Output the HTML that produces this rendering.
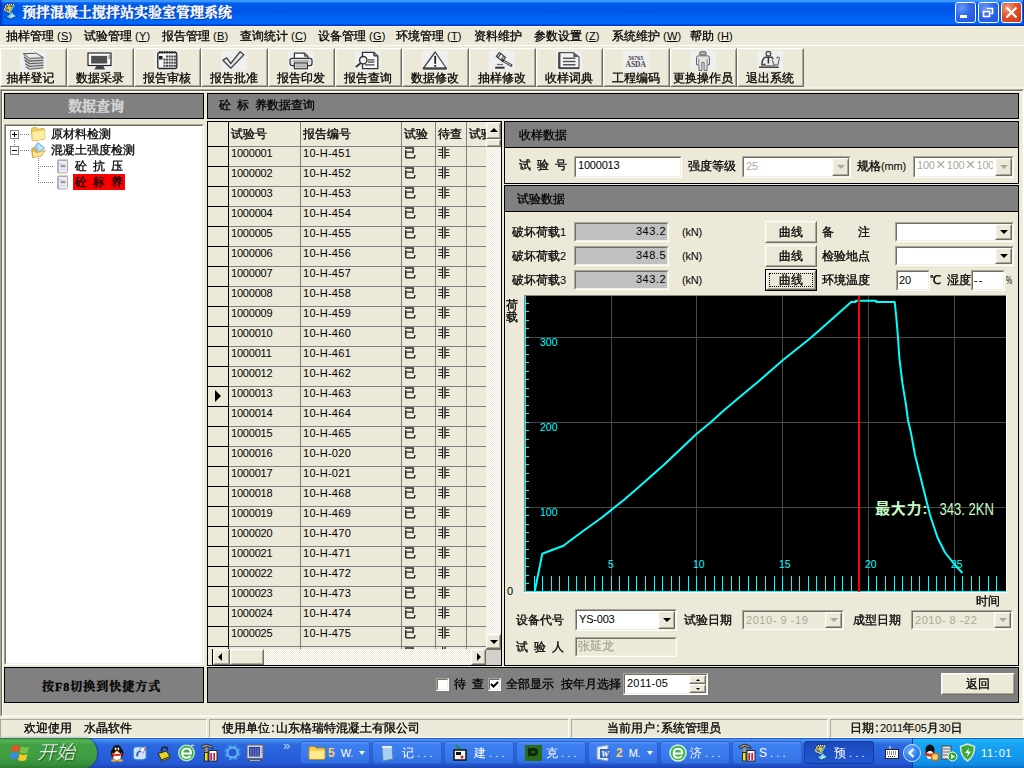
<!DOCTYPE html><html lang="zh-CN"><head><meta charset="utf-8"><title>预拌混凝土搅拌站实验室管理系统</title><style>
*{box-sizing:border-box;margin:0;padding:0}
html,body{width:1024px;height:768px;overflow:hidden;background:#ece9d8}
body{-webkit-text-stroke:.3px;font-family:"Liberation Sans","WenQuanYi Zen Hei","Noto Sans CJK SC",sans-serif;font-size:12px;color:#000;position:relative;line-height:12px}
.a{position:absolute}
.t{position:absolute;white-space:pre;line-height:14px;height:14px;word-spacing:2.67px}
.n{-webkit-text-stroke:0;font-family:"Liberation Sans",sans-serif;font-size:11px;letter-spacing:-0.2px;word-spacing:2.9px}
.gb{position:absolute;background:#808080;border:1px solid #000}
.sunk{position:absolute;border:1px solid;border-color:#aca899 #fff #fff #aca899;background:#fff}
.sunk:before{content:"";position:absolute;left:0;top:0;right:0;bottom:0;border:1px solid;border-color:#716f64 #f1efe2 #f1efe2 #716f64}
.btn{position:absolute;background:#ece9d8;border:1px solid;border-color:#fff #716f64 #716f64 #fff;text-align:center}
.btn:before{content:"";position:absolute;left:0;top:0;right:0;bottom:0;border:1px solid;border-color:#f1efe2 #aca899 #aca899 #f1efe2}
.tb{position:absolute;top:48px;width:67px;height:39px;border:1px solid;border-color:#fff #716f64 #716f64 #fff;background:#ece9d8}
.tb:before{content:"";position:absolute;left:0;top:0;right:0;bottom:0;border:1px solid;border-color:#f1efe2 #aca899 #aca899 #f1efe2}
.tb .ic{position:absolute;left:19px;top:2px;width:26px;height:20px;background:#efefef}
.tb .lb{position:absolute;left:-1px;right:0;top:22px;text-align:center;line-height:14px;white-space:nowrap}
.cell{position:absolute;line-height:14px;white-space:nowrap}
.dis{color:#aca899}
.c{display:inline-block;width:6px;text-align:center;font-family:"Liberation Sans",sans-serif}
</style></head><body>
<div class="a" style="left:0;top:0;width:1024px;height:26px;background:linear-gradient(#3d95ff 0,#3d95ff 6%,#0a6ef8 10%,#005ae8 16%,#0056e5 45%,#0060f0 62%,#0066f8 74%,#0068fc 91%,#0050e0 94%,#0036c8 97%,#0034c6 100%)"></div>
<div class="a" style="left:1023px;top:0;width:1px;height:26px;background:#0030a8"></div>
<div class="a" style="left:0;top:26px;width:1024px;height:1px;background:#f7f4e3"></div>
<svg class="a" style="left:0;top:0" width="20" height="22" viewBox="0 0 20 22"><path d="M12.100 11.700L16.400 16.400 10.5 19.100 6.200 16.800z" fill="#6cc8f6" stroke="#000" stroke-width="1" stroke-dasharray="1 1"/><path d="M11 14.5l3 1.800-3.5 1.600z" fill="#c8ecff"/><path d="M6 4L15.400 4.300 10.200 13.700 3.300 10.400z" fill="#fff" stroke="#000" stroke-width="1" stroke-dasharray="1 1"/><path d="M6.600 5L13.600 5.300 9.700 12.300 4.600 9.900z" fill="#6e6e6e"/><path d="M14.600 4.800L10 13.200" stroke="#28b0f0" stroke-width="1.300"/><path d="M6.5 8.300l1.700-.3.700-1.700.6 3.700 1-2.700 1 .8" fill="none" stroke="#f0e418" stroke-width="1.100"/></svg>
<div class="a" style="left:0;top:0;width:4px;height:26px;background:linear-gradient(90deg,rgba(0,30,170,.75),rgba(0,40,190,.35) 50%,rgba(0,60,220,0))"></div>
<div class="t" style="left:22px;top:5px;height:16px;line-height:16px;font:bold 14px/16px 'Liberation Serif','Noto Serif CJK SC',serif;color:#fff;-webkit-text-stroke:.35px #fff;text-shadow:1px 1px 0 #0a2a8a">预拌混凝土搅拌站实验室管理系统</div>
<div class="a" style="left:955px;top:2px;width:21px;height:21px;border:1px solid #fff;border-radius:3px;background:radial-gradient(circle at 30% 25%,#6a98fa 0,#2f66ea 45%,#2054dc 100%)"><div class="a" style="left:4px;top:12px;width:7px;height:3px;background:#fff"></div></div>
<div class="a" style="left:978px;top:2px;width:21px;height:21px;border:1px solid #fff;border-radius:3px;background:radial-gradient(circle at 30% 25%,#6a98fa 0,#2f66ea 45%,#2054dc 100%)"><svg class="a" style="left:0;top:0" width="19" height="19"><path d="M7.5 5.5h6v5h-2" fill="none" stroke="#fff" stroke-width="1.600"/><rect x="4.5" y="8.5" width="6" height="5" fill="none" stroke="#fff" stroke-width="1.600"/></svg></div>
<div class="a" style="left:1001px;top:2px;width:21px;height:21px;border:1px solid #fff;border-radius:3px;background:radial-gradient(circle at 30% 25%,#f0a080 0,#e0502a 45%,#c83a14 100%)"><svg class="a" style="left:0;top:0" width="19" height="19"><path d="M4.5 4.5l10 10M14.5 4.5l-10 10" stroke="#fff" stroke-width="2.200"/></svg></div>
<div class="t" style="left:6px;top:29px">抽样管理<span class="n" style="letter-spacing:.2px;margin-left:3px">(<u>S</u>)</span></div>
<div class="t" style="left:84px;top:29px">试验管理<span class="n" style="letter-spacing:.2px;margin-left:3px">(<u>Y</u>)</span></div>
<div class="t" style="left:162px;top:29px">报告管理<span class="n" style="letter-spacing:.2px;margin-left:3px">(<u>B</u>)</span></div>
<div class="t" style="left:240px;top:29px">查询统计<span class="n" style="letter-spacing:.2px;margin-left:3px">(<u>C</u>)</span></div>
<div class="t" style="left:318px;top:29px">设备管理<span class="n" style="letter-spacing:.2px;margin-left:3px">(<u>G</u>)</span></div>
<div class="t" style="left:396px;top:29px">环境管理<span class="n" style="letter-spacing:.2px;margin-left:3px">(<u>T</u>)</span></div>
<div class="t" style="left:474px;top:29px">资料维护</div>
<div class="t" style="left:534px;top:29px">参数设置<span class="n" style="letter-spacing:.2px;margin-left:3px">(<u>Z</u>)</span></div>
<div class="t" style="left:612px;top:29px">系统维护<span class="n" style="letter-spacing:.2px;margin-left:3px">(<u>W</u>)</span></div>
<div class="t" style="left:690px;top:29px">帮助<span class="n" style="letter-spacing:.2px;margin-left:3px">(<u>H</u>)</span></div>
<div class="a" style="left:0;top:45px;width:1024px;height:1px;background:#fff"></div>
<div class="tb" style="left:0px"><div class="ic"><svg width="26" height="20" viewBox="0 0 26 20"><path d="M3.3 2.700L16.300 2.200 23.5 6.800V16.700L9.5 18.200 5.900 16.200z" fill="#d4d4d4"/><path d="M3.300 2.700L16.300 2.200 23.5 6.800 9.5 7.400z" fill="#ececec" stroke="#555" stroke-width="1"/><path d="M3.9 6.0L9.5 10.1 23.5 9.3" fill="none" stroke="#555" stroke-width="1.100"/><path d="M4.6 9.3L9.5 12.8 23.5 11.8" fill="none" stroke="#555" stroke-width="1.100"/><path d="M5.2 12.6L9.5 15.5 23.5 14.3" fill="none" stroke="#555" stroke-width="1.100"/><path d="M5.9 15.9L9.5 18.2 23.5 16.8" fill="none" stroke="#555" stroke-width="1.100"/></svg></div><div class="lb" style="left:-6px">抽样登记</div></div>
<div class="tb" style="left:67px"><div class="ic"><svg width="26" height="20" viewBox="0 0 26 20"><rect x="1" y="2" width="23" height="12.5" fill="#fff" stroke="#222" stroke-width="1.200"/><rect x="4.100" y="4.800" width="16.100" height="7.700" fill="#505050"/><rect x="21.5" y="4" width="1.5" height="4" fill="#999"/><path d="M9.800 14.600h6.200l2.100 4H7.200z" fill="#444"/></svg></div><div class="lb" style="left:-1px">数据采录</div></div>
<div class="tb" style="left:134px"><div class="ic"><svg width="26" height="20" viewBox="0 0 26 20"><rect x="3.800" y="1.5" width="19" height="16" rx="1.5" fill="#f4f4f4" stroke="#222" stroke-width="1.300"/><path d="M5 1.200h17" stroke="#222" stroke-width="2" stroke-dasharray="1.5 1"/><rect x="5" y="5" width="3.5" height="3.5" fill="#222"/><rect x="12.1" y="4.5" width="2" height="2" fill="#444"/><rect x="14.7" y="4.5" width="2" height="2" fill="#444"/><rect x="17.3" y="4.5" width="2" height="2" fill="#444"/><rect x="19.9" y="4.5" width="2" height="2" fill="#444"/><rect x="9.5" y="7.6" width="2" height="2" fill="#444"/><rect x="12.1" y="7.6" width="2" height="2" fill="#444"/><rect x="14.7" y="7.6" width="2" height="2" fill="#444"/><rect x="17.3" y="7.6" width="2" height="2" fill="#444"/><rect x="19.9" y="7.6" width="2" height="2" fill="#444"/><rect x="9.5" y="10.7" width="2" height="2" fill="#444"/><rect x="12.1" y="10.7" width="2" height="2" fill="#444"/><rect x="14.7" y="10.7" width="2" height="2" fill="#444"/><rect x="17.3" y="10.7" width="2" height="2" fill="#444"/><rect x="19.9" y="10.7" width="2" height="2" fill="#444"/><rect x="9.5" y="13.8" width="2" height="2" fill="#444"/><rect x="12.1" y="13.8" width="2" height="2" fill="#444"/><rect x="14.7" y="13.8" width="2" height="2" fill="#444"/><rect x="17.3" y="13.8" width="2" height="2" fill="#444"/><rect x="19.9" y="13.8" width="2" height="2" fill="#444"/></svg></div><div class="lb" style="left:-1px">报告审核</div></div>
<div class="tb" style="left:201px"><div class="ic"><svg width="26" height="20" viewBox="0 0 26 20"><path d="M2 9.200L5.700 6.800 9.800 12.5 19.100 .8 22.800 3.700 9.800 17.200z" fill="#ececec" stroke="#4a4a4a" stroke-width="1.400" stroke-linejoin="round"/></svg></div><div class="lb" style="left:-1px">报告批准</div></div>
<div class="tb" style="left:268px"><div class="ic"><svg width="26" height="20" viewBox="0 0 26 20"><path d="M6.400 7.400V2.200h10l3.5 3v2.200" fill="#fafafa" stroke="#333" stroke-width="1.200"/><path d="M16.400 2.200v3h3.5" fill="#888" stroke="#333" stroke-width=".8"/><rect x="2" y="7.400" width="22" height="7.200" rx="2" fill="#e4e4e4" stroke="#333" stroke-width="1.200"/><rect x="6.400" y="12" width="13" height="5.700" fill="#f8f8f8" stroke="#333" stroke-width="1.200"/><path d="M7.5 14h11M7.5 15.800h11" stroke="#777" stroke-width=".9"/><path d="M5 10h16" stroke="#888" stroke-width="1"/></svg></div><div class="lb" style="left:-1px">报告印发</div></div>
<div class="tb" style="left:335px"><div class="ic"><svg width="26" height="20" viewBox="0 0 26 20"><path d="M7.5 1.300h11.300l4 3.700v12.700H7.5z" fill="#fafafa" stroke="#333" stroke-width="1.300"/><path d="M18.800 1.300V5h4" fill="#777" stroke="#333" stroke-width="1"/><path d="M13 8.900h6.5M13 11.200h6.5M10 13.800h9.5" stroke="#444" stroke-width="1.300"/><circle cx="8.300" cy="9.200" r="3.700" fill="#f4f4f4" stroke="#333" stroke-width="1.400"/><path d="M5.800 12L.8 16" stroke="#333" stroke-width="1.800"/></svg></div><div class="lb" style="left:-1px">报告查询</div></div>
<div class="tb" style="left:402px"><div class="ic"><svg width="26" height="20" viewBox="0 0 26 20"><path d="M13.200 1L24.5 17.5H1.200z" fill="#f6f6f6" stroke="#444" stroke-width="1.300" stroke-linejoin="round"/><path d="M1.200 17.5h23.300" stroke="#444" stroke-width="2.200"/><path d="M13.200 4.800v8" stroke="#222" stroke-width="1.800"/><rect x="12.300" y="14" width="1.800" height="1.800" fill="#222"/></svg></div><div class="lb" style="left:-1px">数据修改</div></div>
<div class="tb" style="left:469px"><div class="ic"><svg width="26" height="20" viewBox="0 0 26 20"><g transform="rotate(38 11.900 5.800)"><rect x="8" y="3.300" width="7.800" height="5" fill="#e8e8e8" stroke="#333" stroke-width="1.100"/><path d="M10 3.300v5M13.800 3.300v5" stroke="#333" stroke-width="1"/></g><path d="M13 9l10 5.800" stroke="#333" stroke-width="2.600"/><path d="M15 10.200l7 4" stroke="#ddd" stroke-width="1"/><path d="M6.200 16.700h9.300" stroke="#333" stroke-width="2"/><path d="M8 13.5h6" stroke="#666" stroke-width="1.200"/></svg></div><div class="lb" style="left:-1px">抽样修改</div></div>
<div class="tb" style="left:536px"><div class="ic"><svg width="26" height="20" viewBox="0 0 26 20"><path d="M3.300 1.600h14l5.700 4.400v11.200H3.300z" fill="#f4f4f4" stroke="#555" stroke-width="1.200"/><path d="M3.300 1.600v16" stroke="#444" stroke-width="2.200"/><path d="M3 17.200h20" stroke="#444" stroke-width="1.800"/><path d="M17.300 1.600V6H23z" fill="#555"/><path d="M7 7.200h12.5M7 10.5h12.5M7 13.800h12.5" stroke="#555" stroke-width="1.400"/></svg></div><div class="lb" style="left:-1px">收样词典</div></div>
<div class="tb" style="left:603px"><div class="ic"><svg width="26" height="20" viewBox="0 0 26 20"><text x="12.700" y="8.600" text-anchor="middle" font-family="Liberation Serif,serif" font-size="6" font-weight="bold" fill="#444">56765</text><text x="12.700" y="16.400" text-anchor="middle" font-family="Liberation Serif,serif" font-size="7.5" font-weight="bold" fill="#444">ASDA</text></svg></div><div class="lb" style="left:-1px">工程编码</div></div>
<div class="tb" style="left:670px"><div class="ic"><svg width="26" height="20" viewBox="0 0 26 20"><rect x="9.700" y=".8" width="6.400" height="3.300" rx="1" fill="#b8b8b8" stroke="#555" stroke-width="1"/><path d="M8.5 4.800h9q2 0 2 2v7h-2.400v5.700h-3v-8h-2.200v8h-3v-5.700H6.5v-7q0-2 2-2z" fill="#e2e2e2" stroke="#666" stroke-width="1"/><path d="M8.800 8v5.5M17.200 8v5.5" stroke="#888" stroke-width="1"/></svg></div><div class="lb" style="left:-1px">更换操作员</div></div>
<div class="tb" style="left:737px"><div class="ic"><svg width="26" height="20" viewBox="0 0 26 20"><circle cx="11.400" cy="2.700" r="2.400" fill="#e0e0e0" stroke="#444" stroke-width="1.200"/><path d="M8 6.200h7l2.5 4.5 3.800-5" fill="none" stroke="#444" stroke-width="1.5"/><path d="M8 6.200Q4.5 9 5 14.5l3.5-1.5" fill="none" stroke="#444" stroke-width="1.5"/><path d="M11.400 6.5v6" stroke="#333" stroke-width="1.600"/><path d="M15 8.5l2 5.5h4l1.5-7.5" fill="#e8e8e8" stroke="#555" stroke-width="1"/><path d="M2 16.200h19.700" stroke="#444" stroke-width="1.600"/><path d="M4 14.5h14" stroke="#888" stroke-width="1"/></svg></div><div class="lb" style="left:-1px">退出系统</div></div>
<div class="a" style="left:0;top:87px;width:1024px;height:2px;background:#f3f1e5"></div>
<div class="a" style="left:0;top:89px;width:1024px;height:628px;border:1px solid;border-color:#aca899 #fff #fff #aca899"></div>
<div class="a" style="left:1px;top:90px;width:1022px;height:626px;border:1px solid;border-color:#716f64 #f4f2e6 #f4f2e6 #716f64"></div>
<div class="a" style="left:2px;top:91px;width:1020px;height:624px;border:1px solid;border-color:#fffef4 transparent transparent #fffef4"></div>
<div class="gb" style="left:4px;top:93px;width:200px;height:26px"></div>
<div class="t" style="left:68px;top:99px;-webkit-text-stroke:.4px;font:bold 14px/16px 'Liberation Serif','Noto Serif CJK SC',serif;color:#d6d6d6;height:16px;letter-spacing:0">数据查询</div>
<div class="sunk" style="left:4px;top:124px;width:200px;height:541px"></div>
<div class="a" style="left:10px;top:130px;width:9px;height:9px;border:1px solid #808080;background:#fff"><div class="a" style="left:1px;top:3px;width:5px;height:1px;background:#000"></div><div class="a" style="left:3px;top:1px;width:1px;height:5px;background:#000"></div></div>
<div class="a" style="left:10px;top:146px;width:9px;height:9px;border:1px solid #808080;background:#fff"><div class="a" style="left:1px;top:3px;width:5px;height:1px;background:#000"></div></div>
<div class="a" style="left:20px;top:134px;width:9px;height:1px;background:repeating-linear-gradient(90deg,#808080 0 1px,transparent 1px 2px)"></div>
<div class="a" style="left:20px;top:150px;width:9px;height:1px;background:repeating-linear-gradient(90deg,#808080 0 1px,transparent 1px 2px)"></div>
<div class="a" style="left:14px;top:140px;width:1px;height:6px;background:repeating-linear-gradient(180deg,#808080 0 1px,transparent 1px 2px)"></div>
<div class="a" style="left:38px;top:158px;width:1px;height:24px;background:repeating-linear-gradient(180deg,#808080 0 1px,transparent 1px 2px)"></div>
<div class="a" style="left:38px;top:166px;width:16px;height:1px;background:repeating-linear-gradient(90deg,#808080 0 1px,transparent 1px 2px)"></div>
<div class="a" style="left:38px;top:182px;width:16px;height:1px;background:repeating-linear-gradient(90deg,#808080 0 1px,transparent 1px 2px)"></div>
<svg class="a" style="left:30px;top:126px" width="16" height="16" viewBox="0 0 16 16"><path d="M1.5 3.200q.2-1.200 1.400-1.300l3-.4q.8 0 1.200.8l.5 1 5.5-.8q1.200-.1 1.300 1l.6 8.300q0 1.200-1 1.400l-10.5 1.600q-1.200.1-1.400-1z" fill="#f3cf62" stroke="#c79f35" stroke-width=".8"/><path d="M2.200 6.200l12.200-1.700.6 7.300q0 1-.9 1.100L3.600 14.5q-.9.100-1-.8z" fill="#fdeea6"/></svg>
<svg class="a" style="left:30px;top:142px" width="16" height="16" viewBox="0 0 16 16"><path d="M1.800 6.5L5 5l2 1v8l-4.5 1.200z" fill="#e3b94f" stroke="#b8902f" stroke-width=".7"/><path d="M7.800 .5L14.600 6 9.5 10.800 4.600 5.600z" fill="#a4d0f6" stroke="#6aa4dc" stroke-width=".8"/><path d="M7.800 2l4.5 3.800-2.800 2.600z" fill="#d6ecfc"/><path d="M1.800 8.300L7 10.5 15.300 8.300 11.5 14 3 15.600z" fill="#fbe590" stroke="#c9a23a" stroke-width=".8"/></svg>
<svg class="a" style="left:56px;top:158px" width="13" height="16" viewBox="0 0 13 16"><path d="M2 2.5h9.5v11l-1 1.5H2z" fill="#ededf2" stroke="#a9abc6" stroke-width="1"/><path d="M2 2.5v12.5" stroke="#8f9bd8" stroke-width="1.200"/><path d="M2.5 1.800h9" stroke="#c9a54a" stroke-width="1.600" stroke-dasharray="1 1"/><path d="M4.5 8h5" stroke="#9a9a9a" stroke-width="2.400"/><path d="M4.5 5.5h1M4.5 11.5h1" stroke="#aaa" stroke-width="1.200"/><path d="M6.5 11.5h3" stroke="#ccc" stroke-width="1"/></svg>
<svg class="a" style="left:56px;top:174px" width="13" height="16" viewBox="0 0 13 16"><path d="M2 2.5h9.5v11l-1 1.5H2z" fill="#ededf2" stroke="#a9abc6" stroke-width="1"/><path d="M2 2.5v12.5" stroke="#8f9bd8" stroke-width="1.200"/><path d="M2.5 1.800h9" stroke="#c9a54a" stroke-width="1.600" stroke-dasharray="1 1"/><path d="M4.5 8h5" stroke="#9a9a9a" stroke-width="2.400"/><path d="M4.5 5.5h1M4.5 11.5h1" stroke="#aaa" stroke-width="1.200"/><path d="M6.5 11.5h3" stroke="#ccc" stroke-width="1"/></svg>
<div class="t" style="left:51px;top:127px">原材料检测</div>
<div class="t" style="left:51px;top:143px">混凝土强度检测</div>
<div class="t" style="left:75px;top:159px">砼 抗 压</div>
<div class="a" style="left:73px;top:174px;width:52px;height:16px;background:#f00"></div>
<div class="t" style="left:75px;top:175px">砼 标 养</div>
<div class="gb" style="left:4px;top:667px;width:200px;height:36px"></div>
<div class="t" style="left:42px;top:680px;letter-spacing:1px;font-weight:bold;font-family:'Liberation Serif','Noto Serif CJK SC',serif">按F8切换到快捷方式</div>
<div class="gb" style="left:207px;top:93px;width:812px;height:26px"></div>
<div class="t" style="left:219px;top:98px">砼 标 养数据查询</div>
<div class="a" style="left:207px;top:121px;width:295px;height:545px;border:1px solid #000;background:#ece9d8;overflow:hidden" id="grid">
<div class="cell" style="left:23px;top:5px">试验号</div>
<div class="cell" style="left:95px;top:5px">报告编号</div>
<div class="cell" style="left:196px;top:5px">试验</div>
<div class="cell" style="left:230px;top:5px">待查</div>
<div class="cell" style="left:261px;top:5px">试验</div>
<div class="cell n" style="left:23px;top:24px">1000001</div>
<div class="cell n" style="left:95px;top:24px;letter-spacing:.27px">10-H-451</div>
<div class="cell" style="left:196px;top:24px">已</div>
<div class="cell" style="left:230px;top:24px">非</div>
<div class="cell n" style="left:23px;top:44px">1000002</div>
<div class="cell n" style="left:95px;top:44px;letter-spacing:.27px">10-H-452</div>
<div class="cell" style="left:196px;top:44px">已</div>
<div class="cell" style="left:230px;top:44px">非</div>
<div class="cell n" style="left:23px;top:64px">1000003</div>
<div class="cell n" style="left:95px;top:64px;letter-spacing:.27px">10-H-453</div>
<div class="cell" style="left:196px;top:64px">已</div>
<div class="cell" style="left:230px;top:64px">非</div>
<div class="cell n" style="left:23px;top:84px">1000004</div>
<div class="cell n" style="left:95px;top:84px;letter-spacing:.27px">10-H-454</div>
<div class="cell" style="left:196px;top:84px">已</div>
<div class="cell" style="left:230px;top:84px">非</div>
<div class="cell n" style="left:23px;top:104px">1000005</div>
<div class="cell n" style="left:95px;top:104px;letter-spacing:.27px">10-H-455</div>
<div class="cell" style="left:196px;top:104px">已</div>
<div class="cell" style="left:230px;top:104px">非</div>
<div class="cell n" style="left:23px;top:124px">1000006</div>
<div class="cell n" style="left:95px;top:124px;letter-spacing:.27px">10-H-456</div>
<div class="cell" style="left:196px;top:124px">已</div>
<div class="cell" style="left:230px;top:124px">非</div>
<div class="cell n" style="left:23px;top:144px">1000007</div>
<div class="cell n" style="left:95px;top:144px;letter-spacing:.27px">10-H-457</div>
<div class="cell" style="left:196px;top:144px">已</div>
<div class="cell" style="left:230px;top:144px">非</div>
<div class="cell n" style="left:23px;top:164px">1000008</div>
<div class="cell n" style="left:95px;top:164px;letter-spacing:.27px">10-H-458</div>
<div class="cell" style="left:196px;top:164px">已</div>
<div class="cell" style="left:230px;top:164px">非</div>
<div class="cell n" style="left:23px;top:184px">1000009</div>
<div class="cell n" style="left:95px;top:184px;letter-spacing:.27px">10-H-459</div>
<div class="cell" style="left:196px;top:184px">已</div>
<div class="cell" style="left:230px;top:184px">非</div>
<div class="cell n" style="left:23px;top:204px">1000010</div>
<div class="cell n" style="left:95px;top:204px;letter-spacing:.27px">10-H-460</div>
<div class="cell" style="left:196px;top:204px">已</div>
<div class="cell" style="left:230px;top:204px">非</div>
<div class="cell n" style="left:23px;top:224px">1000011</div>
<div class="cell n" style="left:95px;top:224px;letter-spacing:.27px">10-H-461</div>
<div class="cell" style="left:196px;top:224px">已</div>
<div class="cell" style="left:230px;top:224px">非</div>
<div class="cell n" style="left:23px;top:244px">1000012</div>
<div class="cell n" style="left:95px;top:244px;letter-spacing:.27px">10-H-462</div>
<div class="cell" style="left:196px;top:244px">已</div>
<div class="cell" style="left:230px;top:244px">非</div>
<div class="cell n" style="left:23px;top:264px">1000013</div>
<div class="cell n" style="left:95px;top:264px;letter-spacing:.27px">10-H-463</div>
<div class="cell" style="left:196px;top:264px">已</div>
<div class="cell" style="left:230px;top:264px">非</div>
<div class="cell n" style="left:23px;top:284px">1000014</div>
<div class="cell n" style="left:95px;top:284px;letter-spacing:.27px">10-H-464</div>
<div class="cell" style="left:196px;top:284px">已</div>
<div class="cell" style="left:230px;top:284px">非</div>
<div class="cell n" style="left:23px;top:304px">1000015</div>
<div class="cell n" style="left:95px;top:304px;letter-spacing:.27px">10-H-465</div>
<div class="cell" style="left:196px;top:304px">已</div>
<div class="cell" style="left:230px;top:304px">非</div>
<div class="cell n" style="left:23px;top:324px">1000016</div>
<div class="cell n" style="left:95px;top:324px;letter-spacing:.27px">10-H-020</div>
<div class="cell" style="left:196px;top:324px">已</div>
<div class="cell" style="left:230px;top:324px">非</div>
<div class="cell n" style="left:23px;top:344px">1000017</div>
<div class="cell n" style="left:95px;top:344px;letter-spacing:.27px">10-H-021</div>
<div class="cell" style="left:196px;top:344px">已</div>
<div class="cell" style="left:230px;top:344px">非</div>
<div class="cell n" style="left:23px;top:364px">1000018</div>
<div class="cell n" style="left:95px;top:364px;letter-spacing:.27px">10-H-468</div>
<div class="cell" style="left:196px;top:364px">已</div>
<div class="cell" style="left:230px;top:364px">非</div>
<div class="cell n" style="left:23px;top:384px">1000019</div>
<div class="cell n" style="left:95px;top:384px;letter-spacing:.27px">10-H-469</div>
<div class="cell" style="left:196px;top:384px">已</div>
<div class="cell" style="left:230px;top:384px">非</div>
<div class="cell n" style="left:23px;top:404px">1000020</div>
<div class="cell n" style="left:95px;top:404px;letter-spacing:.27px">10-H-470</div>
<div class="cell" style="left:196px;top:404px">已</div>
<div class="cell" style="left:230px;top:404px">非</div>
<div class="cell n" style="left:23px;top:424px">1000021</div>
<div class="cell n" style="left:95px;top:424px;letter-spacing:.27px">10-H-471</div>
<div class="cell" style="left:196px;top:424px">已</div>
<div class="cell" style="left:230px;top:424px">非</div>
<div class="cell n" style="left:23px;top:444px">1000022</div>
<div class="cell n" style="left:95px;top:444px;letter-spacing:.27px">10-H-472</div>
<div class="cell" style="left:196px;top:444px">已</div>
<div class="cell" style="left:230px;top:444px">非</div>
<div class="cell n" style="left:23px;top:464px">1000023</div>
<div class="cell n" style="left:95px;top:464px;letter-spacing:.27px">10-H-473</div>
<div class="cell" style="left:196px;top:464px">已</div>
<div class="cell" style="left:230px;top:464px">非</div>
<div class="cell n" style="left:23px;top:484px">1000024</div>
<div class="cell n" style="left:95px;top:484px;letter-spacing:.27px">10-H-474</div>
<div class="cell" style="left:196px;top:484px">已</div>
<div class="cell" style="left:230px;top:484px">非</div>
<div class="cell n" style="left:23px;top:504px">1000025</div>
<div class="cell n" style="left:95px;top:504px;letter-spacing:.27px">10-H-475</div>
<div class="cell" style="left:196px;top:504px">已</div>
<div class="cell" style="left:230px;top:504px">非</div>
<div class="cell n" style="left:23px;top:524px">1000026</div>
<div class="cell n" style="left:95px;top:524px;letter-spacing:.27px">10-H-476</div>
<div class="cell" style="left:196px;top:524px">已</div>
<div class="cell" style="left:230px;top:524px">非</div>
<div class="a" style="left:0;top:24px;width:21px;height:1px;background:#000"></div>
<div class="a" style="left:21px;top:24px;width:257px;height:1px;background:#808080"></div>
<div class="a" style="left:0;top:44px;width:21px;height:1px;background:#000"></div>
<div class="a" style="left:21px;top:44px;width:257px;height:1px;background:#808080"></div>
<div class="a" style="left:0;top:64px;width:21px;height:1px;background:#000"></div>
<div class="a" style="left:21px;top:64px;width:257px;height:1px;background:#808080"></div>
<div class="a" style="left:0;top:84px;width:21px;height:1px;background:#000"></div>
<div class="a" style="left:21px;top:84px;width:257px;height:1px;background:#808080"></div>
<div class="a" style="left:0;top:104px;width:21px;height:1px;background:#000"></div>
<div class="a" style="left:21px;top:104px;width:257px;height:1px;background:#808080"></div>
<div class="a" style="left:0;top:124px;width:21px;height:1px;background:#000"></div>
<div class="a" style="left:21px;top:124px;width:257px;height:1px;background:#808080"></div>
<div class="a" style="left:0;top:144px;width:21px;height:1px;background:#000"></div>
<div class="a" style="left:21px;top:144px;width:257px;height:1px;background:#808080"></div>
<div class="a" style="left:0;top:164px;width:21px;height:1px;background:#000"></div>
<div class="a" style="left:21px;top:164px;width:257px;height:1px;background:#808080"></div>
<div class="a" style="left:0;top:184px;width:21px;height:1px;background:#000"></div>
<div class="a" style="left:21px;top:184px;width:257px;height:1px;background:#808080"></div>
<div class="a" style="left:0;top:204px;width:21px;height:1px;background:#000"></div>
<div class="a" style="left:21px;top:204px;width:257px;height:1px;background:#808080"></div>
<div class="a" style="left:0;top:224px;width:21px;height:1px;background:#000"></div>
<div class="a" style="left:21px;top:224px;width:257px;height:1px;background:#808080"></div>
<div class="a" style="left:0;top:244px;width:21px;height:1px;background:#000"></div>
<div class="a" style="left:21px;top:244px;width:257px;height:1px;background:#808080"></div>
<div class="a" style="left:0;top:264px;width:21px;height:1px;background:#000"></div>
<div class="a" style="left:21px;top:264px;width:257px;height:1px;background:#808080"></div>
<div class="a" style="left:0;top:284px;width:21px;height:1px;background:#000"></div>
<div class="a" style="left:21px;top:284px;width:257px;height:1px;background:#808080"></div>
<div class="a" style="left:0;top:304px;width:21px;height:1px;background:#000"></div>
<div class="a" style="left:21px;top:304px;width:257px;height:1px;background:#808080"></div>
<div class="a" style="left:0;top:324px;width:21px;height:1px;background:#000"></div>
<div class="a" style="left:21px;top:324px;width:257px;height:1px;background:#808080"></div>
<div class="a" style="left:0;top:344px;width:21px;height:1px;background:#000"></div>
<div class="a" style="left:21px;top:344px;width:257px;height:1px;background:#808080"></div>
<div class="a" style="left:0;top:364px;width:21px;height:1px;background:#000"></div>
<div class="a" style="left:21px;top:364px;width:257px;height:1px;background:#808080"></div>
<div class="a" style="left:0;top:384px;width:21px;height:1px;background:#000"></div>
<div class="a" style="left:21px;top:384px;width:257px;height:1px;background:#808080"></div>
<div class="a" style="left:0;top:404px;width:21px;height:1px;background:#000"></div>
<div class="a" style="left:21px;top:404px;width:257px;height:1px;background:#808080"></div>
<div class="a" style="left:0;top:424px;width:21px;height:1px;background:#000"></div>
<div class="a" style="left:21px;top:424px;width:257px;height:1px;background:#808080"></div>
<div class="a" style="left:0;top:444px;width:21px;height:1px;background:#000"></div>
<div class="a" style="left:21px;top:444px;width:257px;height:1px;background:#808080"></div>
<div class="a" style="left:0;top:464px;width:21px;height:1px;background:#000"></div>
<div class="a" style="left:21px;top:464px;width:257px;height:1px;background:#808080"></div>
<div class="a" style="left:0;top:484px;width:21px;height:1px;background:#000"></div>
<div class="a" style="left:21px;top:484px;width:257px;height:1px;background:#808080"></div>
<div class="a" style="left:0;top:504px;width:21px;height:1px;background:#000"></div>
<div class="a" style="left:21px;top:504px;width:257px;height:1px;background:#808080"></div>
<div class="a" style="left:0;top:524px;width:21px;height:1px;background:#000"></div>
<div class="a" style="left:21px;top:524px;width:257px;height:1px;background:#808080"></div>
<div class="a" style="left:0;top:544px;width:21px;height:1px;background:#000"></div>
<div class="a" style="left:21px;top:544px;width:257px;height:1px;background:#808080"></div>
<div class="a" style="left:20px;top:0;width:1px;height:527px;background:#000"></div>
<div class="a" style="left:92px;top:0;width:1px;height:527px;background:#808080"></div>
<div class="a" style="left:193px;top:0;width:1px;height:527px;background:#808080"></div>
<div class="a" style="left:227px;top:0;width:1px;height:527px;background:#808080"></div>
<div class="a" style="left:258px;top:0;width:1px;height:527px;background:#808080"></div>
<div class="a" style="left:7px;top:268px;width:0;height:0;border-left:6px solid #000;border-top:6px solid transparent;border-bottom:6px solid transparent"></div>
<div class="a" style="left:278px;top:0;width:15px;height:527px;background:conic-gradient(#fff 25%,#ece9d8 0 50%,#fff 0 75%,#ece9d8 0) 0 0/2px 2px"></div>
<div class="btn" style="left:278px;top:0px;width:15px;height:17px"><div class="a" style="left:3px;top:5px;border-bottom:4px solid #000;border-left:4px solid transparent;border-right:4px solid transparent"></div></div>
<div class="btn" style="left:278px;top:17px;width:15px;height:8px"></div>
<div class="btn" style="left:278px;top:512px;width:15px;height:15px"><div class="a" style="left:3px;top:5px;border-top:4px solid #000;border-left:4px solid transparent;border-right:4px solid transparent"></div></div>
<div class="a" style="left:0;top:527px;width:278px;height:16px;background:conic-gradient(#fff 25%,#ece9d8 0 50%,#fff 0 75%,#ece9d8 0) 0 0/2px 2px"></div>
<div class="a" style="left:0;top:527px;width:4px;height:16px;background:#ece9d8"></div>
<div class="a" style="left:4px;top:527px;width:1px;height:16px;background:#000"></div>
<div class="btn" style="left:5px;top:527px;width:17px;height:16px"><div class="a" style="left:4px;top:3px;border-right:4px solid #000;border-top:4px solid transparent;border-bottom:4px solid transparent"></div></div>
<div class="btn" style="left:22px;top:527px;width:34px;height:16px"></div>
<div class="btn" style="left:263px;top:527px;width:15px;height:16px"><div class="a" style="left:5px;top:3px;border-left:4px solid #000;border-top:4px solid transparent;border-bottom:4px solid transparent"></div></div>
<div class="a" style="left:278px;top:527px;width:15px;height:16px;background:#d4d0c8;border-top:1px solid #716f64"></div>
</div>
<div class="a" style="left:504px;top:121px;width:515px;height:63px;border:1px solid #000"></div>
<div class="a" style="left:505px;top:122px;width:513px;height:26px;background:#808080;border-bottom:1px solid #000"></div>
<div class="t" style="left:519px;top:128px">收样数据</div>
<div class="t" style="left:519px;top:158px">试 验 号</div>
<div class="sunk" style="left:574px;top:156px;width:108px;height:22px"></div>
<div class="t n" style="left:578px;top:158px">1000013</div>
<div class="t" style="left:688px;top:159px">强度等级</div>
<div class="sunk" style="left:742px;top:156px;width:109px;height:22px"></div>
<div class="btn" style="left:832px;top:158px;width:17px;height:18px"><div class="a" style="left:4px;top:6px;border-top:4px solid #aca899;border-left:4px solid transparent;border-right:4px solid transparent"></div></div>
<div class="t n dis" style="left:746px;top:159px">25</div>
<div class="t" style="left:857px;top:159px">规格<span class="n">(mm)</span></div>
<div class="sunk" style="left:913px;top:156px;width:101px;height:22px"></div>
<div class="btn" style="left:995px;top:158px;width:17px;height:18px"><div class="a" style="left:4px;top:6px;border-top:4px solid #aca899;border-left:4px solid transparent;border-right:4px solid transparent"></div></div>
<div class="t n dis" style="left:917px;top:158px;width:76px;overflow:hidden">100<span style="display:inline-block;width:12px;text-align:center;font-size:17px;line-height:0;letter-spacing:0;vertical-align:-1px">×</span>100<span style="display:inline-block;width:12px;text-align:center;font-size:17px;line-height:0;letter-spacing:0;vertical-align:-1px">×</span>100</div>
<div class="a" style="left:504px;top:185px;width:515px;height:481px;border:1px solid #000"></div>
<div class="a" style="left:505px;top:186px;width:513px;height:26px;background:#808080;border-bottom:1px solid #000"></div>
<div class="t" style="left:517px;top:192px">试验数据</div>
<div class="t" style="left:512px;top:225px">破坏荷载<span class="n">1</span></div>
<div class="sunk" style="left:574px;top:222px;width:95px;height:20px;background:#c0c0c0"></div>
<div class="t n" style="left:574px;top:224px;width:92px;text-align:right;letter-spacing:.5px">343.2</div>
<div class="t n" style="left:682px;top:225px;letter-spacing:-.2px">(kN)</div>
<div class="btn" style="left:765px;top:221px;width:52px;height:22px"></div>
<div class="t" style="left:779px;top:225px">曲线</div>
<div class="t" style="left:512px;top:249px">破坏荷载<span class="n">2</span></div>
<div class="sunk" style="left:574px;top:246px;width:95px;height:20px;background:#c0c0c0"></div>
<div class="t n" style="left:574px;top:248px;width:92px;text-align:right;letter-spacing:.5px">348.5</div>
<div class="t n" style="left:682px;top:249px;letter-spacing:-.2px">(kN)</div>
<div class="btn" style="left:765px;top:245px;width:52px;height:22px"></div>
<div class="t" style="left:779px;top:249px">曲线</div>
<div class="t" style="left:512px;top:273px">破坏荷载<span class="n">3</span></div>
<div class="sunk" style="left:574px;top:270px;width:95px;height:20px;background:#c0c0c0"></div>
<div class="t n" style="left:574px;top:272px;width:92px;text-align:right;letter-spacing:.5px">343.2</div>
<div class="t n" style="left:682px;top:273px;letter-spacing:-.2px">(kN)</div>
<div class="a" style="left:765px;top:269px;width:52px;height:22px;border:1px solid #000"></div>
<div class="btn" style="left:766px;top:270px;width:50px;height:20px"></div>
<div class="a" style="left:769px;top:273px;width:44px;height:14px;border:1px dotted #000"></div>
<div class="t" style="left:779px;top:273px">曲线</div>
<div class="t" style="left:822px;top:225px">备    注</div>
<div class="t" style="left:822px;top:249px">检验地点</div>
<div class="t" style="left:822px;top:273px">环境温度</div>
<div class="sunk" style="left:895px;top:222px;width:119px;height:20px"></div>
<div class="btn" style="left:995px;top:224px;width:17px;height:16px"><div class="a" style="left:4px;top:5px;border-top:4px solid #000;border-left:4px solid transparent;border-right:4px solid transparent"></div></div>
<div class="sunk" style="left:895px;top:246px;width:119px;height:20px"></div>
<div class="btn" style="left:995px;top:248px;width:17px;height:16px"><div class="a" style="left:4px;top:5px;border-top:4px solid #000;border-left:4px solid transparent;border-right:4px solid transparent"></div></div>
<div class="sunk" style="left:896px;top:270px;width:34px;height:21px"></div>
<div class="t n" style="left:899px;top:273px">20</div>
<div class="t" style="left:930px;top:273px">℃ 湿度</div>
<div class="sunk" style="left:971px;top:270px;width:34px;height:21px"></div>
<div class="t n" style="left:974px;top:273px;letter-spacing:1px">--</div>
<div class="t n" style="left:1006px;top:273px;transform:scaleX(.62);transform-origin:0 0">%</div>
<div class="t" style="left:506px;top:299px;width:12px;white-space:normal;height:26px;line-height:12px">荷载</div>
<div class="t n" style="left:507px;top:584px">0</div>
<div class="t" style="left:976px;top:594px">时间</div>
<svg class="a" style="left:523px;top:294px" width="484" height="299" viewBox="523 294 484 299"><rect x="524" y="295" width="483" height="298" fill="#fff"/><rect x="524" y="295" width="482" height="297" fill="#8c8a80"/><rect x="525" y="296" width="481" height="296" fill="#000"/><rect x="611" y="296" width="1" height="296" fill="#484848"/><rect x="696" y="296" width="1" height="296" fill="#484848"/><rect x="782" y="296" width="1" height="296" fill="#484848"/><rect x="868" y="296" width="1" height="296" fill="#484848"/><rect x="954" y="296" width="1" height="296" fill="#484848"/><rect x="525" y="507" width="481" height="1" fill="#484848"/><rect x="525" y="422" width="481" height="1" fill="#484848"/><rect x="525" y="337" width="481" height="1" fill="#484848"/><rect x="525" y="296" width="1" height="296" fill="#0ff"/><rect x="525" y="591" width="481" height="1" fill="#0ff"/><path d="M525 583.5h4M525 575.5h4M525 566.5h4M525 558.5h4M525 549.5h4M525 541.5h4M525 532.5h4M525 524.5h4M525 515.5h4M525 507.5h4M525 498.5h4M525 490.5h4M525 481.5h4M525 473.5h4M525 464.5h4M525 456.5h4M525 447.5h4M525 439.5h4M525 430.5h4M525 422.5h4M525 413.5h4M525 405.5h4M525 396.5h4M525 388.5h4M525 379.5h4M525 371.5h4M525 362.5h4M525 354.5h4M525 345.5h4M525 337.5h4M525 328.5h4M525 320.5h4M525 311.5h4M525 303.5h4" stroke="#0ff" stroke-width="1"/><path d="M534.5 576v15.5M542.5 576v15.5M551.5 576v15.5M559.5 576v15.5M568.5 576v15.5M576.5 576v15.5M585.5 576v15.5M594.5 576v15.5M602.5 576v15.5M611.5 576v15.5M619.5 576v15.5M628.5 576v15.5M636.5 576v15.5M645.5 576v15.5M654.5 576v15.5M662.5 576v15.5M671.5 576v15.5M679.5 576v15.5M688.5 576v15.5M696.5 576v15.5M705.5 576v15.5M714.5 576v15.5M722.5 576v15.5M731.5 576v15.5M739.5 576v15.5M748.5 576v15.5M756.5 576v15.5M765.5 576v15.5M774.5 576v15.5M782.5 576v15.5M791.5 576v15.5M799.5 576v15.5M808.5 576v15.5M816.5 576v15.5M825.5 576v15.5M834.5 576v15.5M842.5 576v15.5M851.5 576v15.5M859.5 576v15.5M868.5 576v15.5M876.5 576v15.5M885.5 576v15.5M894.5 576v15.5M902.5 576v15.5M911.5 576v15.5M919.5 576v15.5M928.5 576v15.5M936.5 576v15.5M945.5 576v15.5M954.5 576v15.5M962.5 576v15.5M971.5 576v15.5M979.5 576v15.5M988.5 576v15.5M996.5 576v15.5" stroke="#0ff" stroke-width="1"/><text x="540" y="516" font-family="Liberation Sans,sans-serif" font-size="10.5" fill="#0ff">100</text><text x="540" y="431" font-family="Liberation Sans,sans-serif" font-size="10.5" fill="#0ff">200</text><text x="540" y="346" font-family="Liberation Sans,sans-serif" font-size="10.5" fill="#0ff">300</text><text x="608" y="568" font-family="Liberation Sans,sans-serif" font-size="10.5" fill="#0ff">5</text><text x="693" y="568" font-family="Liberation Sans,sans-serif" font-size="10.5" fill="#0ff">10</text><text x="779" y="568" font-family="Liberation Sans,sans-serif" font-size="10.5" fill="#0ff">15</text><text x="865" y="568" font-family="Liberation Sans,sans-serif" font-size="10.5" fill="#0ff">20</text><text x="951" y="568" font-family="Liberation Sans,sans-serif" font-size="10.5" fill="#0ff">25</text><polyline points="534.8,591.0 542.3,553.8 552.0,550.0 563.5,545.7 569.0,541.5 583.8,530.5 601.6,517.8 611.7,509.6 624.4,499.5 637.7,488.0 664.0,464.7 696.5,434.0 710.2,422.7 724.0,410.2 741.5,395.5 759.0,381.0 783.0,360.0 810.3,338.2 836.9,314.7 851.2,302.0 855.6,302.0 855.8,300.8 876.2,300.8 876.4,302.0 894.7,302.0 896.2,316.3 897.8,335.0 899.4,358.5 902.5,383.7 906.2,406.2 908.0,420.0 911.0,433.0 915.0,455.0 922.5,485.0 930.0,515.0 937.5,537.5 945.0,552.5 955.0,565.0 962.5,573.0" fill="none" stroke="#0ff" stroke-width="2" stroke-linejoin="round"/><rect x="858" y="296" width="2" height="296" fill="#f00"/><text y="514" fill="#c4fcc4" style="-webkit-text-stroke:0"><tspan x="875" font-weight="bold" font-family="Liberation Sans,Noto Sans CJK SC,sans-serif" font-size="15" letter-spacing=".8">最大力:</tspan><tspan x="939.5" y="514.5" font-family="Liberation Sans,sans-serif" font-size="16" textLength="54.5" lengthAdjust="spacingAndGlyphs">343. 2KN</tspan></text></svg>
<div class="t" style="left:516px;top:613px">设备代号</div>
<div class="sunk" style="left:575px;top:609px;width:102px;height:22px"></div>
<div class="btn" style="left:658px;top:611px;width:17px;height:18px"><div class="a" style="left:4px;top:6px;border-top:4px solid #000;border-left:4px solid transparent;border-right:4px solid transparent"></div></div>
<div class="t n" style="left:579px;top:612px">YS-003</div>
<div class="t" style="left:684px;top:613px">试验日期</div>
<div class="sunk" style="left:742px;top:610px;width:102px;height:20px;background:#ece9d8"></div>
<div class="btn" style="left:825px;top:612px;width:17px;height:16px"><div class="a" style="left:4px;top:5px;border-top:4px solid #aca899;border-left:4px solid transparent;border-right:4px solid transparent"></div></div>
<div class="t n dis" style="left:746px;top:613px"><span style="word-spacing:0;letter-spacing:.55px">2010- 9 -19</span></div>
<div class="t" style="left:853px;top:613px">成型日期</div>
<div class="sunk" style="left:911px;top:610px;width:102px;height:20px;background:#ece9d8"></div>
<div class="btn" style="left:994px;top:612px;width:17px;height:16px"><div class="a" style="left:4px;top:5px;border-top:4px solid #aca899;border-left:4px solid transparent;border-right:4px solid transparent"></div></div>
<div class="t n dis" style="left:915px;top:613px"><span style="word-spacing:0;letter-spacing:.55px">2010- 8 -22</span></div>
<div class="t" style="left:516px;top:640px">试 验 人</div>
<div class="sunk" style="left:575px;top:637px;width:102px;height:20px;background:#ece9d8"></div>
<div class="t dis" style="left:578px;top:639px">张延龙</div>
<div class="gb" style="left:207px;top:667px;width:812px;height:36px"></div>
<div class="sunk" style="left:436px;top:678px;width:13px;height:13px"></div>
<div class="sunk" style="left:488px;top:678px;width:13px;height:13px"></div>
<svg class="a" style="left:488px;top:678px" width="13" height="13"><path d="M3 6l2.5 2.5L10 4" fill="none" stroke="#000" stroke-width="2"/></svg>
<div class="t" style="left:454px;top:677px">待 查</div>
<div class="t" style="left:506px;top:677px">全部显示</div>
<div class="t" style="left:561px;top:677px">按年月选择</div>
<div class="sunk" style="left:623px;top:673px;width:85px;height:22px"></div>
<div class="t n" style="left:627px;top:676px;letter-spacing:.23px">2011-05</div>
<div class="btn" style="left:689px;top:675px;width:17px;height:9px"><div class="a" style="left:5px;top:2px;border-bottom:2px solid #000;border-left:2px solid transparent;border-right:2px solid transparent;margin:1px 0 0 1px"></div></div>
<div class="btn" style="left:689px;top:684px;width:17px;height:9px"><div class="a" style="left:5px;top:2px;border-top:2px solid #000;border-left:2px solid transparent;border-right:2px solid transparent;margin:1px 0 0 1px"></div></div>
<div class="btn" style="left:941px;top:673px;width:74px;height:22px"></div>
<div class="t" style="left:966px;top:677px">返回</div>
<div class="a" style="left:0px;top:719px;width:207px;height:19px;border:1px solid;border-color:#aca899 #fff #fff #aca899"></div>
<div class="a" style="left:209px;top:719px;width:360px;height:19px;border:1px solid;border-color:#aca899 #fff #fff #aca899"></div>
<div class="a" style="left:571px;top:719px;width:257px;height:19px;border:1px solid;border-color:#aca899 #fff #fff #aca899"></div>
<div class="a" style="left:830px;top:719px;width:194px;height:19px;border:1px solid;border-color:#aca899 #fff #fff #aca899"></div>
<div class="t" style="left:24px;top:721px">欢迎使用  水晶软件</div>
<div class="t" style="left:222px;top:721px">使用单位<span class="c">:</span>山东格瑞特混凝土有限公司</div>
<div class="t" style="left:607px;top:721px">当前用户<span class="c">:</span>系统管理员</div>
<div class="t" style="left:850px;top:721px">日期<span class="c">:</span><span class="n">2011</span>年<span class="n">05</span>月<span class="n">30</span>日</div>
<div class="a" style="left:0;top:738px;width:1024px;height:30px;background:linear-gradient(#2458d0 0,#2458d0 3%,#4a94f2 5%,#3a82ea 12%,#2b69e0 22%,#2860dc 55%,#2559d4 85%,#1c44b0 100%)"></div>
<div class="a" style="left:0;top:738px;width:97px;height:30px;border-radius:0 12px 12px 0/0 15px 15px 0;background:linear-gradient(#2f7f33 0,#56b258 8%,#42a145 22%,#3f9e42 60%,#379239 85%,#2b7b2f 100%);box-shadow:1px 0 2px #1a3a8a"></div>
<svg class="a" style="left:10px;top:743px" width="22" height="20" viewBox="0 0 22 20"><path d="M2 3q4-2 8 0l-1.5 6q-4-2-8 0z" fill="#e8542a"/><path d="M11 3.5q4 2 8 0l-1.5 6q-4 2-8 0z" fill="#7cc244"/><path d="M.500 10.5q4-2 8 0L7 16.5q-4-2-8 0z" fill="#3a8ae8"/><path d="M9.5 11q4 2 8 0L16 17q-4 2-8 0z" fill="#f8c828"/></svg>
<div class="t" style="left:37px;top:742px;height:22px;font:italic 300 19px/22px 'Liberation Sans','Noto Sans CJK SC',sans-serif;color:#fff;-webkit-text-stroke:0;text-shadow:1px 1px 1px #1a4a1a">开始</div>
<svg class="a" style="left:108px;top:744px" width="18" height="18" viewBox="0 0 18 18"><ellipse cx="9" cy="9" rx="6.5" ry="6" fill="#111"/><ellipse cx="9" cy="5.5" rx="4.300" ry="4.5" fill="#111"/><ellipse cx="9" cy="12" rx="4" ry="4" fill="#fff"/><path d="M4 8.5q5 3 10 0l.5 2q-5.5 3-11 0z" fill="#e8281a"/><path d="M5 10.5l-1 4 2.5-2.5z" fill="#e8281a"/><ellipse cx="6" cy="16.5" rx="3" ry="1.200" fill="#f8a818"/><ellipse cx="12" cy="16.5" rx="3" ry="1.200" fill="#f8a818"/><ellipse cx="7.600" cy="4.800" rx=".9" ry="1.300" fill="#fff"/><ellipse cx="10.400" cy="4.800" rx=".9" ry="1.300" fill="#fff"/><ellipse cx="9" cy="7.200" rx="1.800" ry=".7" fill="#f8a818"/></svg>
<svg class="a" style="left:132px;top:744px" width="17" height="18" viewBox="0 0 17 18"><rect x="1" y="2.5" width="13.5" height="13.5" rx="3.5" fill="#cfe2fa" stroke="#2f74d8" stroke-width="1.600"/><path d="M5.5 12.5q-1.5-4 3-5.5" fill="none" stroke="#2a5ab8" stroke-width="1.800"/><path d="M7.5 5l6-2.5-2.5 7z" fill="#fff" stroke="#7890b8" stroke-width=".8"/><path d="M12 4.5l3 1-2 1z" fill="#e8481a"/></svg>
<svg class="a" style="left:156px;top:745px" width="16" height="17" viewBox="0 0 16 17"><path d="M5.5 6.5V4.800q.3-2.800 3-2.800t3 2.300v1.200" fill="none" stroke="#222" stroke-width="1.600"/><path d="M2 8.5l8.5-2.5 3.5 5.5-8.5 3.5z" fill="#e4d622" stroke="#222" stroke-width="1"/><path d="M5.5 15l8.5-3.5v1.800l-8.5 3z" fill="#a89a10" stroke="#222" stroke-width=".6"/></svg>
<svg class="a" style="left:177px;top:743px" width="19" height="19" viewBox="0 0 19 19"><circle cx="9.5" cy="10" r="7.800" fill="#35b046" stroke="#bfe8c4" stroke-width="1.300"/><path d="M5.200 10.5h8.800q0-5-4.400-5T5.200 10.5q0 4.300 4.400 4.300 2.800 0 3.900-2" fill="none" stroke="#fff" stroke-width="2.100"/><path d="M14 2.5q2-1 3 .5" fill="none" stroke="#bfe8c4" stroke-width="1.200"/></svg>
<svg class="a" style="left:200px;top:743px" width="18" height="20" viewBox="0 0 18 20"><path d="M1 3.5l5-2.5 6 2 1 2.5-2-.5-4-1.5-5 2z" fill="#9a9a9a" stroke="#222" stroke-width=".9"/><path d="M6.5 4.5v5" stroke="#c89838" stroke-width="2.200"/><rect x="4.5" y="9.5" width="3.5" height="8.5" fill="#f0e020" stroke="#222" stroke-width=".9"/><rect x="9" y="7.5" width="8" height="10.5" fill="#fff" stroke="#222" stroke-width="1"/><path d="M11.200 10v7M14.200 10v7" stroke="#d81838" stroke-width="1.800"/></svg>
<svg class="a" style="left:223px;top:743px" width="19" height="19" viewBox="0 0 19 19"><circle cx="9.5" cy="9.5" r="6.300" fill="none" stroke="#3a92e4" stroke-width="3.600" stroke-dasharray="3.200 1.750"/><circle cx="9.5" cy="9.5" r="5" fill="none" stroke="#6ab8f4" stroke-width="1.800"/><circle cx="9.5" cy="9.5" r="3.200" fill="#2a5cd0"/></svg>
<svg class="a" style="left:246px;top:744px" width="18" height="18" viewBox="0 0 18 18"><rect x="1" y="1" width="16" height="13.5" fill="#d4d4dc" stroke="#666" stroke-width="1"/><rect x="3" y="3" width="11" height="9.5" fill="#2a3a98"/><path d="M4 5h9M4 7h9M4 9h9M4 11h9" stroke="#9ab0f0" stroke-width=".9" stroke-dasharray="1.5 1"/><path d="M15.5 4v6" stroke="#888" stroke-dasharray="1 1"/><path d="M2 16.5h14" stroke="#555" stroke-width="1.600"/><path d="M4 16.5h10" stroke="#c8c8c8" stroke-width=".8"/></svg>
<div class="t" style="left:283px;top:739px;color:#bcd4ff;-webkit-text-stroke:0;font:13px/14px 'Liberation Sans',sans-serif">»</div>
<div class="a" style="left:300px;top:741px;width:70px;height:23px;border-radius:3px;background:linear-gradient(#5a96f8 0,#3c80f0 12%,#3a7aec 60%,#3070e0 100%);border:1px solid #2a60d0">
<svg class="a" style="left:7px;top:3px" width="18" height="16" viewBox="0 0 18 16"><path d="M1 3q0-1.5 1.5-1.5h4L8 3h7.5Q17 3 17 4.5V13q0 1.5-1.5 1.5h-13Q1 14.5 1 13z" fill="#f8d050" stroke="#b88a20"/><path d="M1.5 6h15v7q0 1-1 1h-13q-1 0-1-1z" fill="#fce890"/></svg>
<div class="t" style="left:27px;top:4px;color:#fff;-webkit-text-stroke:0"><span style="color:#ffd060;font:bold 12px/14px 'Liberation Sans',sans-serif">5</span> <span class="n">W.</span></div>
<div class="a" style="left:58px;top:9px;border-top:4px solid #fff;border-left:3px solid transparent;border-right:3px solid transparent"></div>
</div>
<div class="a" style="left:372px;top:741px;width:70px;height:23px;border-radius:3px;background:linear-gradient(#5a96f8 0,#3c80f0 12%,#3a7aec 60%,#3070e0 100%);border:1px solid #2a60d0">
<svg class="a" style="left:6px;top:2px" width="16" height="18" viewBox="0 0 16 18"><path d="M3 2h10l1 13-10 2z" fill="#a8d0f0" stroke="#5888b8"/><path d="M3 2h10v2H3z" fill="#e8e8e8"/></svg>
<div class="t" style="left:29px;top:4px;color:#fff;-webkit-text-stroke:0">记<span class="n" style="letter-spacing:3.2px;margin-left:3px">...</span></div>
</div>
<div class="a" style="left:444px;top:741px;width:70px;height:23px;border-radius:3px;background:linear-gradient(#5a96f8 0,#3c80f0 12%,#3a7aec 60%,#3070e0 100%);border:1px solid #2a60d0">
<svg class="a" style="left:6px;top:2px" width="18" height="18" viewBox="0 0 18 18"><path d="M5 1l4 4" stroke="#2a8a2a" stroke-width="2"/><rect x="3" y="6" width="12" height="10" fill="#f4f4f4" stroke="#111" stroke-width="1.5"/><rect x="5" y="8" width="5" height="3" fill="#111"/><circle cx="11" cy="13" r="1.5" fill="#d82828"/></svg>
<div class="t" style="left:29px;top:4px;color:#fff;-webkit-text-stroke:0">建<span class="n" style="letter-spacing:3.2px;margin-left:3px">...</span></div>
</div>
<div class="a" style="left:516px;top:741px;width:70px;height:23px;border-radius:3px;background:linear-gradient(#5a96f8 0,#3c80f0 12%,#3a7aec 60%,#3070e0 100%);border:1px solid #2a60d0">
<div class="a" style="left:8px;top:3px;width:17px;height:16px;background:#2a6a1a"></div><div class="a" style="left:11px;top:6px;width:10px;height:8px;border:3px solid #0a2a0a;border-radius:0 4px 4px 0"></div>
<div class="t" style="left:29px;top:4px;color:#fff;-webkit-text-stroke:0">克<span class="n" style="letter-spacing:3.2px;margin-left:3px">...</span></div>
</div>
<div class="a" style="left:588px;top:741px;width:70px;height:23px;border-radius:3px;background:linear-gradient(#5a96f8 0,#3c80f0 12%,#3a7aec 60%,#3070e0 100%);border:1px solid #2a60d0">
<svg class="a" style="left:5px;top:2px" width="18" height="18" viewBox="0 0 18 18"><path d="M3 3l11-2v16L3 15z" fill="#e8eef8" stroke="#8898b8"/><rect x="6" y="5" width="10" height="9" fill="#3a68c8"/><text x="11" y="13" text-anchor="middle" font-family="Liberation Serif,serif" font-style="italic" font-weight="bold" font-size="9" fill="#fff">W</text></svg>
<div class="t" style="left:27px;top:4px;color:#fff;-webkit-text-stroke:0"><span style="color:#ffd060;font:bold 12px/14px 'Liberation Sans',sans-serif">2</span> <span class="n">M.</span></div>
<div class="a" style="left:58px;top:9px;border-top:4px solid #fff;border-left:3px solid transparent;border-right:3px solid transparent"></div>
</div>
<div class="a" style="left:660px;top:741px;width:70px;height:23px;border-radius:3px;background:linear-gradient(#5a96f8 0,#3c80f0 12%,#3a7aec 60%,#3070e0 100%);border:1px solid #2a60d0">
<svg class="a" style="left:8px;top:2px" width="18" height="18" viewBox="0 0 19 19"><circle cx="9.5" cy="9.5" r="8.5" fill="#3cb84a" stroke="#d8f0d8" stroke-width="1.5"/><path d="M5 10h9q0-5-4.5-5T5 10q0 4.5 4.5 4.5 3 0 4-2" fill="none" stroke="#fff" stroke-width="2.200"/></svg>
<div class="t" style="left:29px;top:4px;color:#fff;-webkit-text-stroke:0">济<span class="n" style="letter-spacing:3.2px;margin-left:3px">...</span></div>
</div>
<div class="a" style="left:732px;top:741px;width:70px;height:23px;border-radius:3px;background:linear-gradient(#5a96f8 0,#3c80f0 12%,#3a7aec 60%,#3070e0 100%);border:1px solid #2a60d0">
<svg class="a" style="left:5px;top:1px" width="18" height="20" viewBox="0 0 18 20"><path d="M1 3.5l5-2.5 6 2 1 2.5-2-.5-4-1.5-5 2z" fill="#9a9a9a" stroke="#222" stroke-width=".9"/><path d="M6.5 4.5v5" stroke="#c89838" stroke-width="2.200"/><rect x="4.5" y="9.5" width="3.5" height="8.5" fill="#f0e020" stroke="#222" stroke-width=".9"/><rect x="9" y="7.5" width="8" height="10.5" fill="#fff" stroke="#222" stroke-width="1"/><path d="M11.200 10v7M14.200 10v7" stroke="#d81838" stroke-width="1.800"/></svg>
<div class="t" style="left:26px;top:4px;color:#fff;-webkit-text-stroke:0">S<span class="n" style="letter-spacing:3.2px;margin-left:3px">...</span></div>
</div>
<div class="a" style="left:804px;top:741px;width:70px;height:23px;border-radius:3px;background:linear-gradient(#1c48b8 0,#1e50c8 50%,#2258d0 100%);border:1px solid #143a9a">
<svg class="a" style="left:6px;top:-1px" width="20" height="22" viewBox="0 0 20 22"><path d="M12.100 11.700L16.400 16.400 10.5 19.100 6.200 16.800z" fill="#6cc8f6" stroke="#000" stroke-width="1" stroke-dasharray="1 1"/><path d="M11 14.5l3 1.800-3.5 1.600z" fill="#c8ecff"/><path d="M6 4L15.400 4.300 10.200 13.700 3.300 10.400z" fill="#fff" stroke="#000" stroke-width="1" stroke-dasharray="1 1"/><path d="M6.600 5L13.600 5.300 9.700 12.300 4.600 9.900z" fill="#6e6e6e"/><path d="M14.600 4.800L10 13.200" stroke="#28b0f0" stroke-width="1.300"/><path d="M6.5 8.300l1.700-.3.700-1.700.6 3.700 1-2.700 1 .8" fill="none" stroke="#f0e418" stroke-width="1.100"/></svg>
<div class="t" style="left:29px;top:4px;color:#fff;-webkit-text-stroke:0">预<span class="n" style="letter-spacing:3.2px;margin-left:3px">...</span></div>
</div>
<svg class="a" style="left:885px;top:746px" width="14" height="14" viewBox="0 0 14 14"><path d="M5 0v3" stroke="#fff"/><rect x=".5" y="3.5" width="13" height="9" fill="#fff" stroke="#222"/><path d="M2 6h10M2 8h10M3 10.5h8" stroke="#222" stroke-dasharray="1 1"/></svg>
<div class="a" style="left:912px;top:738px;width:112px;height:30px;background:linear-gradient(#1060c8 0,#1060c8 3%,#20b8f8 5%,#1aaaf4 14%,#169ff0 30%,#1398ee 60%,#108ce2 88%,#0c6cc4 100%);border-left:1px solid #0a3a9a"></div>
<div class="a" style="left:903px;top:744px;width:18px;height:18px;border-radius:9px;background:radial-gradient(circle at 40% 35%,#6ab8ff 0,#2a78e8 60%,#1a58c8 100%);border:1px solid #d8e8ff"></div>
<svg class="a" style="left:903px;top:744px" width="18" height="18"><path d="M10.5 5l-4 4 4 4" fill="none" stroke="#fff" stroke-width="2.200"/></svg>
<svg class="a" style="left:922px;top:744px" width="18" height="18" viewBox="0 0 18 18"><ellipse cx="8" cy="6" rx="4.5" ry="5.5" fill="#111"/><ellipse cx="8" cy="11" rx="3.5" ry="4" fill="#fff"/><path d="M3 8q5 3.5 10 0v3q-5 3-10 0z" fill="#e8281a"/><circle cx="13" cy="13" r="4" fill="#f8a828" stroke="#a86808"/><path d="M11 12h4M11 14h4" stroke="#fff"/></svg>
<svg class="a" style="left:940px;top:744px" width="18" height="18" viewBox="0 0 18 18"><rect x="2" y="2" width="9" height="13" fill="#e8e8e8" stroke="#444"/><path d="M3 5h7M3 8h7M3 11h7" stroke="#666"/><circle cx="12.5" cy="12.5" r="4.5" fill="#2aa82a" stroke="#fff"/><path d="M11 10l4 2.5-4 2.5z" fill="#fff"/></svg>
<svg class="a" style="left:959px;top:743px" width="17" height="19" viewBox="0 0 17 19"><path d="M8.5 1l7 2.5q0 10-7 14.5Q1.5 13.5 1.5 3.5z" fill="#3aa83a" stroke="#d8e8d8" stroke-width="1.5"/><path d="M10 5l-4 5h3l-1 4 4-5.5H9z" fill="#fff"/></svg>
<div class="t n" style="left:981px;top:746px;color:#fff;letter-spacing:.6px">11<span class="c" style="width:5px">:</span>01</div>
</body></html>
